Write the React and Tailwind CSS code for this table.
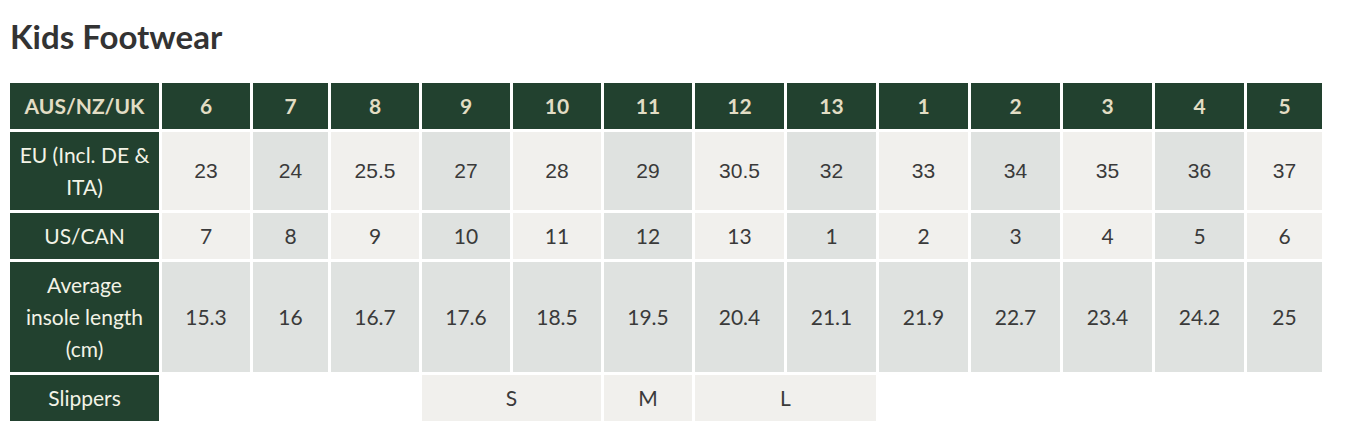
import React from 'react';

const sizes = ['6', '7', '8', '9', '10', '11', '12', '13', '1', '2', '3', '4', '5'];
const eu = ['23', '24', '25.5', '27', '28', '29', '30.5', '32', '33', '34', '35', '36', '37'];
const us = ['7', '8', '9', '10', '11', '12', '13', '1', '2', '3', '4', '5', '6'];
const insole = ['15.3', '16', '16.7', '17.6', '18.5', '19.5', '20.4', '21.1', '21.9', '22.7', '23.4', '24.2', '25'];
const widths = [149, 88, 75, 88, 88, 88, 88, 89, 89, 89, 89, 89, 89, 75];

const label = 'bg-[#22412f] text-[#f3f3e6] font-normal text-center align-middle px-2 py-[7px]';
const light = 'bg-[#f1f0ed]';
const gray = 'bg-[#dfe2e0]';

const App = () => {
  return (
    <div className="bg-white min-h-screen px-[7px] pt-[16px]" style={{ fontFamily: 'Lato, "Open Sans", sans-serif' }}>
      <h2 className="text-[33px] leading-[40px] font-bold text-[#333333] pl-[3px] mb-[24px]">Kids Footwear</h2>
      <table className="table-fixed border-separate border-spacing-[3px] w-[1318px] text-[21px] leading-[32px] text-[#3a3a3a]">
        <colgroup>
          {widths.map((w, i) => (
            <col key={i} style={{ width: w }} />
          ))}
        </colgroup>
        <tbody>
          <tr>
            <th className="bg-[#22412f] text-[#e2ddc4] font-bold text-center py-[7px]">AUS/NZ/UK</th>
            {sizes.map((s, i) => (
              <th key={i} className="bg-[#22412f] text-[#e2ddc4] font-bold text-center py-[7px]">
                {s}
              </th>
            ))}
          </tr>
          <tr>
            <td className={label}>EU (Incl. DE &amp; ITA)</td>
            {eu.map((v, i) => (
              <td
                key={i}
                className={`${i % 2 === 0 ? light : gray} text-center py-[7px] text-[21px]`}
                style={{ fontFamily: '"Liberation Sans", Arial, sans-serif' }}
              >
                {v}
              </td>
            ))}
          </tr>
          <tr>
            <td className={label}>US/CAN</td>
            {us.map((v, i) => (
              <td key={i} className={`${i % 2 === 0 ? light : gray} text-center py-[7px]`}>
                {v}
              </td>
            ))}
          </tr>
          <tr>
            <td className={label}>Average insole length (cm)</td>
            {insole.map((v, i) => (
              <td key={i} className={`${gray} text-center py-[7px]`}>
                {v}
              </td>
            ))}
          </tr>
          <tr>
            <td className={label}>Slippers</td>
            <td></td>
            <td></td>
            <td></td>
            <td colSpan={2} className={`${light} text-center py-[7px]`}>S</td>
            <td className={`${light} text-center py-[7px]`}>M</td>
            <td colSpan={2} className={`${light} text-center py-[7px]`}>L</td>
            <td></td>
            <td></td>
            <td></td>
            <td></td>
            <td></td>
          </tr>
        </tbody>
      </table>
    </div>
  );
};

export default App;
